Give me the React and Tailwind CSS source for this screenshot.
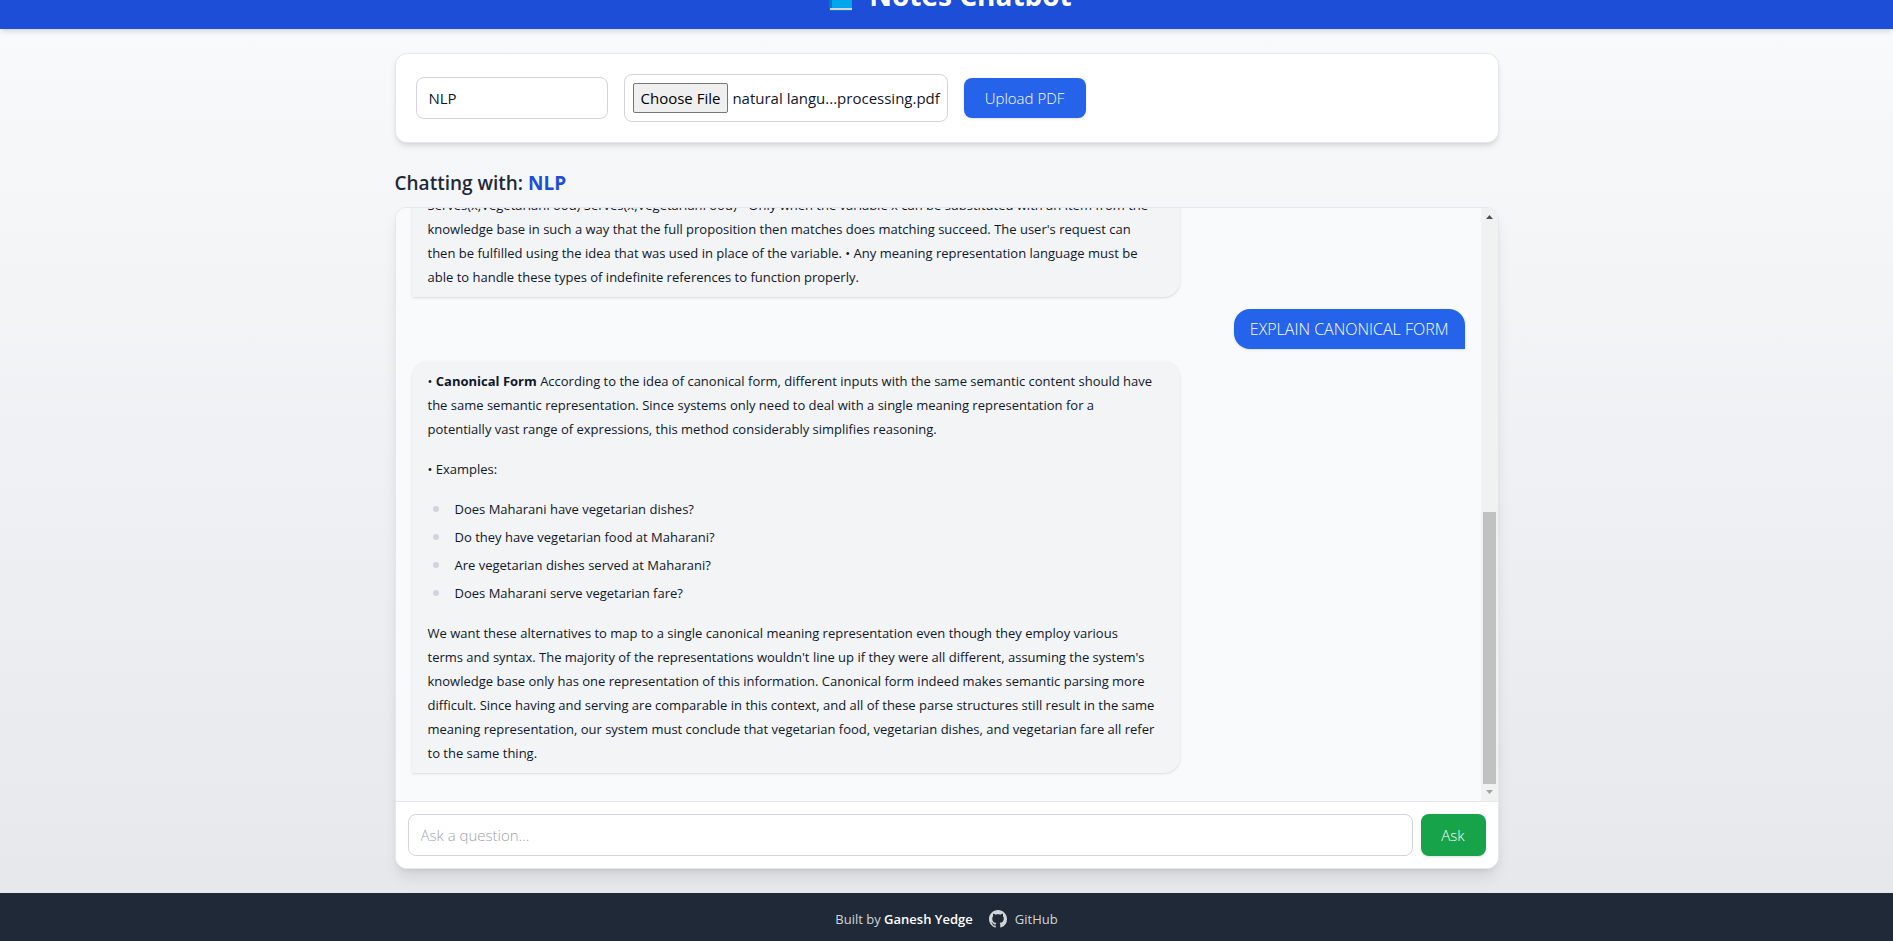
import React from "react";

function BookIcon() {
  return (
    <svg className="h-9 w-10" viewBox="0 0 40 36" aria-hidden="true">
      <rect x="8" y="6" width="23" height="28" fill="#0078d0" />
      <rect x="11" y="6" width="20" height="25" fill="#00a6ed" />
      <rect x="9" y="31" width="22" height="2" fill="#d3d3d3" />
    </svg>
  );
}

function GitHubIcon() {
  return (
    <svg className="h-[18px] w-[18px]" viewBox="0 0 16 16" fill="currentColor" aria-hidden="true">
      <path d="M8 0C3.58 0 0 3.58 0 8c0 3.54 2.29 6.53 5.47 7.59.4.07.55-.17.55-.38 0-.19-.01-.82-.01-1.49-2.01.37-2.53-.49-2.69-.94-.09-.23-.48-.94-.82-1.13-.28-.15-.68-.52-.01-.53.63-.01 1.08.58 1.23.82.72 1.21 1.87.87 2.33.66.07-.52.28-.87.51-1.07-1.78-.2-3.64-.89-3.64-3.95 0-.87.31-1.59.82-2.15-.08-.2-.36-1.02.08-2.12 0 0 .67-.21 2.2.82.64-.18 1.32-.27 2-.27s1.36.09 2 .27c1.53-1.04 2.2-.82 2.2-.82.44 1.1.16 1.92.08 2.12.51.56.82 1.27.82 2.15 0 3.07-1.87 3.75-3.65 3.95.29.25.54.73.54 1.48 0 1.07-.01 1.93-.01 2.2 0 .21.15.46.55.38A8.01 8.01 0 0 0 16 8c0-4.42-3.58-8-8-8z" />
    </svg>
  );
}

function Bot({ children }) {
  return (
    <div className="w-[73%] shrink-0 rounded-2xl rounded-bl-none bg-[#f3f4f6] px-4 py-2 text-[13px] leading-6 whitespace-nowrap text-[#0f172a] shadow-sm">
      {children}
    </div>
  );
}

function Lines({ rows }) {
  return (
    <p className="mt-4 first:mt-0">
      {rows.map((row, i) => (
        <React.Fragment key={i}>
          {i > 0 && <br />}
          {row}
        </React.Fragment>
      ))}
    </p>
  );
}

function ScrollBar() {
  return (
    <div className="flex w-[17px] shrink-0 flex-col items-center bg-[#f1f1f1]" aria-hidden="true">
      <svg className="h-[17px] w-[17px] shrink-0" viewBox="0 0 17 17">
        <path d="M5 11h7l-3.5-4z" fill="#505050" />
      </svg>
      <div className="grow-[286]" />
      <div className="w-[13px] grow-[272] bg-[#c1c1c1]" />
      <svg className="h-[17px] w-[17px] shrink-0" viewBox="0 0 17 17">
        <path d="M5 6h7l-3.5 4z" fill="#a3a3a3" />
      </svg>
    </div>
  );
}

const QUESTIONS = [
  "Does Maharani have vegetarian dishes?",
  "Do they have vegetarian food at Maharani?",
  "Are vegetarian dishes served at Maharani?",
  "Does Maharani serve vegetarian fare?",
];

export default function App() {
  return (
    <div className="flex h-screen flex-col overflow-hidden bg-linear-to-b from-[#f9fafb] to-[#e5e7eb] font-['Open_Sans','Noto_Sans',sans-serif] text-[#0f172a]">
      <header className="-mt-[39px] flex shrink-0 items-center justify-center gap-2 bg-[#1d4ed8] p-4 text-white shadow-md">
        <BookIcon />
        <h1 className="text-[28px] leading-9 font-bold">Notes Chatbot</h1>
      </header>

      <main className="mx-auto flex min-h-0 w-full max-w-6xl flex-1 flex-col p-6">
        <form
          className="mb-6 flex items-center gap-4 rounded-xl border border-[#e5e7eb] bg-white p-5 shadow-md"
          onSubmit={(e) => e.preventDefault()}
        >
          <input
            aria-label="Subject"
            defaultValue="NLP"
            className="h-[42px] w-48 rounded-lg border border-[#d1d5db] px-3 text-[15px]"
          />
          <div className="flex h-12 w-[324px] items-center gap-1 rounded-lg border border-[#d1d5db] px-2 text-[15px] whitespace-nowrap">
            <button
              type="button"
              className="h-[30px] shrink-0 rounded-xs border border-[#767676] bg-[#efefef] px-[7px] text-black"
            >
              Choose File
            </button>
            <span>natural langu...processing.pdf</span>
          </div>
          <button className="h-10 w-[122px] rounded-lg bg-[#2563eb] text-[15px] font-light text-white shadow-sm">
            Upload PDF
          </button>
        </form>

        <h2 className="mb-2.5 pt-0.5 text-[19px] leading-7 font-semibold text-[#1f2937]">
          Chatting with: <span className="font-bold text-[#1d4ed8]">NLP</span>
        </h2>

        <section className="flex min-h-0 flex-1 flex-col overflow-hidden rounded-xl border border-[#e5e7eb] bg-white shadow-lg">
          <div className="flex min-h-0 flex-1 bg-[#f9fafc]">
            <div className="flex min-w-0 flex-1 flex-col justify-end gap-3 overflow-hidden px-4 pb-7">
              <Bot>
                <Lines
                  rows={[
                    "Serves(x,VegetarianFood) Serves(x,VegetarianFood) • Only when the variable x can be substituted with an item from the",
                    "knowledge base in such a way that the full proposition then matches does matching succeed. The user's request can",
                    "then be fulfilled using the idea that was used in place of the variable. • Any meaning representation language must be",
                    "able to handle these types of indefinite references to function properly.",
                  ]}
                />
              </Bot>
              <div className="shrink-0 self-end rounded-2xl rounded-br-none bg-[#2563eb] px-4 py-2 text-base font-light text-white shadow-sm">
                EXPLAIN CANONICAL FORM
              </div>
              <Bot>
                <Lines
                  rows={[
                    <>
                      • <strong className="font-bold">Canonical Form</strong> According to the idea of canonical form,
                      different inputs with the same semantic content should have
                    </>,
                    "the same semantic representation. Since systems only need to deal with a single meaning representation for a",
                    "potentially vast range of expressions, this method considerably simplifies reasoning.",
                  ]}
                />
                <Lines rows={["• Examples:"]} />
                <ul className="my-4 flex flex-col gap-1">
                  {QUESTIONS.map((q) => (
                    <li key={q} className="flex items-center gap-4 pl-[5px]">
                      <span className="h-[6px] w-[6px] rounded-full bg-[#d1d5db]" />
                      {q}
                    </li>
                  ))}
                </ul>
                <Lines
                  rows={[
                    "We want these alternatives to map to a single canonical meaning representation even though they employ various",
                    "terms and syntax. The majority of the representations wouldn't line up if they were all different, assuming the system's",
                    "knowledge base only has one representation of this information. Canonical form indeed makes semantic parsing more",
                    "difficult. Since having and serving are comparable in this context, and all of these parse structures still result in the same",
                    "meaning representation, our system must conclude that vegetarian food, vegetarian dishes, and vegetarian fare all refer",
                    "to the same thing.",
                  ]}
                />
              </Bot>
            </div>
            <ScrollBar />
          </div>
          <form
            className="flex gap-2 border-t border-[#e5e7eb] bg-white p-3"
            onSubmit={(e) => e.preventDefault()}
          >
            <input
              aria-label="Question"
              placeholder="Ask a question..."
              className="h-[42px] min-w-0 flex-1 rounded-lg border border-[#d1d5db] px-3 text-[15px] font-light placeholder:text-[#9ca3af]"
            />
            <button className="h-[42px] w-[65px] rounded-lg bg-[#16a34a] text-[15px] font-light text-white shadow-sm">
              Ask
            </button>
          </form>
        </section>
      </main>

      <footer className="flex h-12 shrink-0 items-center justify-center gap-4 bg-[#1f2937] pt-1 text-[13px] leading-6 text-[#d1d5db]">
        <p>
          Built by <span className="font-semibold text-white">Ganesh Yedge</span>
        </p>
        <a href="#github" className="flex items-center gap-2">
          <GitHubIcon />
          GitHub
        </a>
      </footer>
    </div>
  );
}
